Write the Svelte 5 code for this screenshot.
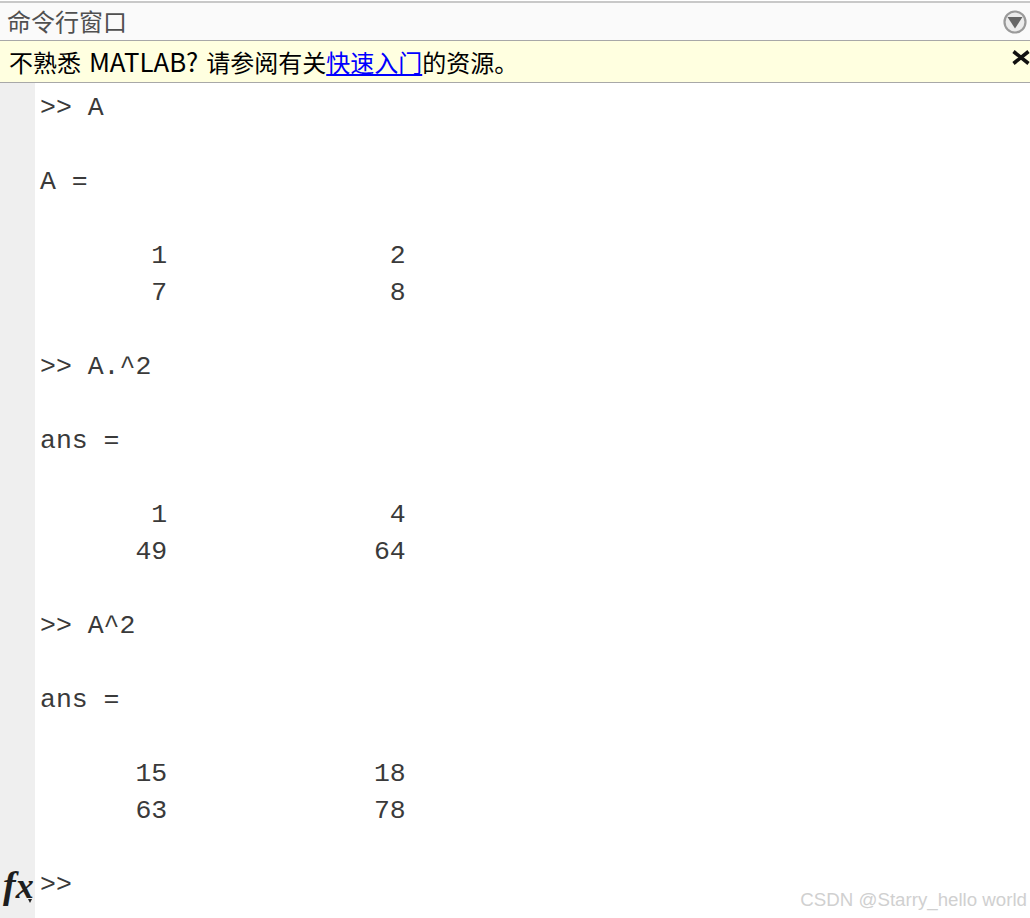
<script>
  const lines = [
    '>> A', '', 'A =', '', '       1              2', '       7              8', '',
    '>> A.^2', '', 'ans =', '', '       1              4', '      49             64', '',
    '>> A^2', '', 'ans =', '', '      15             18', '      63             78', '', '>>'
  ];
</script>

<div class="window">
  <div class="rule"></div>
  <header class="titlebar">
    <span class="title">命令行窗口</span>
    <svg class="menu" width="26" height="26" viewBox="0 0 26 26" aria-hidden="true">
      <circle cx="13" cy="13" r="10.5" fill="#ececec" stroke="#9a9a9a" stroke-width="2.2"/>
      <path d="M5.5 8h15L13 19.5z" fill="#666"/>
    </svg>
  </header>
  <div class="notice">
    <span>不熟悉 <span class="latin">MATLAB?</span> 请参阅有关<a href="#start">快速入门</a>的资源。</span>
    <svg class="close" width="18" height="15" viewBox="0 0 18 15" aria-hidden="true">
      <path d="M1.5 1.5l15 12M16.5 1.5l-15 12" stroke="#111" stroke-width="3.6" fill="none"/>
    </svg>
  </div>
  <main class="console">
    <aside class="gutter">
      <span class="fx">f<span class="x">x</span></span>
      <span class="caret"></span>
    </aside>
    <div class="output">
      {#each lines as line}
        <div class="line">{line}</div>
      {/each}
    </div>
  </main>
  <div class="mark">CSDN @Starry_hello world</div>
</div>

<style>
  :global(body) { margin: 0; background: #fff; }
  .window {
    position: relative;
    width: 1030px;
    height: 918px;
    overflow: hidden;
    display: flex;
    flex-direction: column;
    font-family: "Noto Sans CJK SC", "Liberation Sans", sans-serif;
    background: #fff;
  }
  .rule { height: 2px; margin-top: 1px; background: #c8c8c8; flex: none; }
  .titlebar {
    height: 38px;
    flex: none;
    box-sizing: border-box;
    display: flex;
    align-items: center;
    justify-content: space-between;
    padding: 0 2px 0 7px;
    background: #fafafa;
    border-bottom: 1px solid #a8a8a8;
  }
  .title { font-size: 24px; color: #505050; line-height: 1; margin-bottom: 2px; }
  .menu { display: block; }
  .notice {
    height: 42px;
    flex: none;
    box-sizing: border-box;
    display: flex;
    justify-content: space-between;
    align-items: flex-start;
    padding: 2px 0 0 9px;
    background: #ffffe0;
    border-bottom: 1px solid #a8a8a8;
    font-size: 24px;
    line-height: 36px;
    color: #000;
    white-space: nowrap;
    word-spacing: 2.5px;
  }
  .latin { font-size: 25.8px; }
  .notice a { color: #0000ff; text-decoration: underline; }
  .close { margin-top: 7px; }
  .console { flex: 1; display: flex; min-height: 0; }
  .gutter { width: 35px; flex: none; background: #efefef; position: relative; }
  .fx {
    position: absolute;
    left: 3px;
    bottom: 14px;
    font: italic bold 38px/1 "Liberation Serif", serif;
    color: #1e1e1e;
    letter-spacing: -1px;
  }
  .x { font-size: 36px; margin-left: 1px; }
  .caret {
    position: absolute;
    left: 28px;
    bottom: 15px;
    width: 0;
    height: 0;
    border-left: 2.5px solid transparent;
    border-right: 2.5px solid transparent;
    border-top: 4px solid #222;
  }
  .output {
    padding: 7px 0 0 5px;
    font: 26.5px/37.03px "Liberation Mono", monospace;
    color: #3a3a3a;
  }
  .line { height: 37.03px; white-space: pre; }
  .mark {
    position: absolute;
    right: 3px;
    bottom: 8px;
    font: 18.7px/1 "Liberation Sans", sans-serif;
    color: #d0d0d0;
  }
</style>
